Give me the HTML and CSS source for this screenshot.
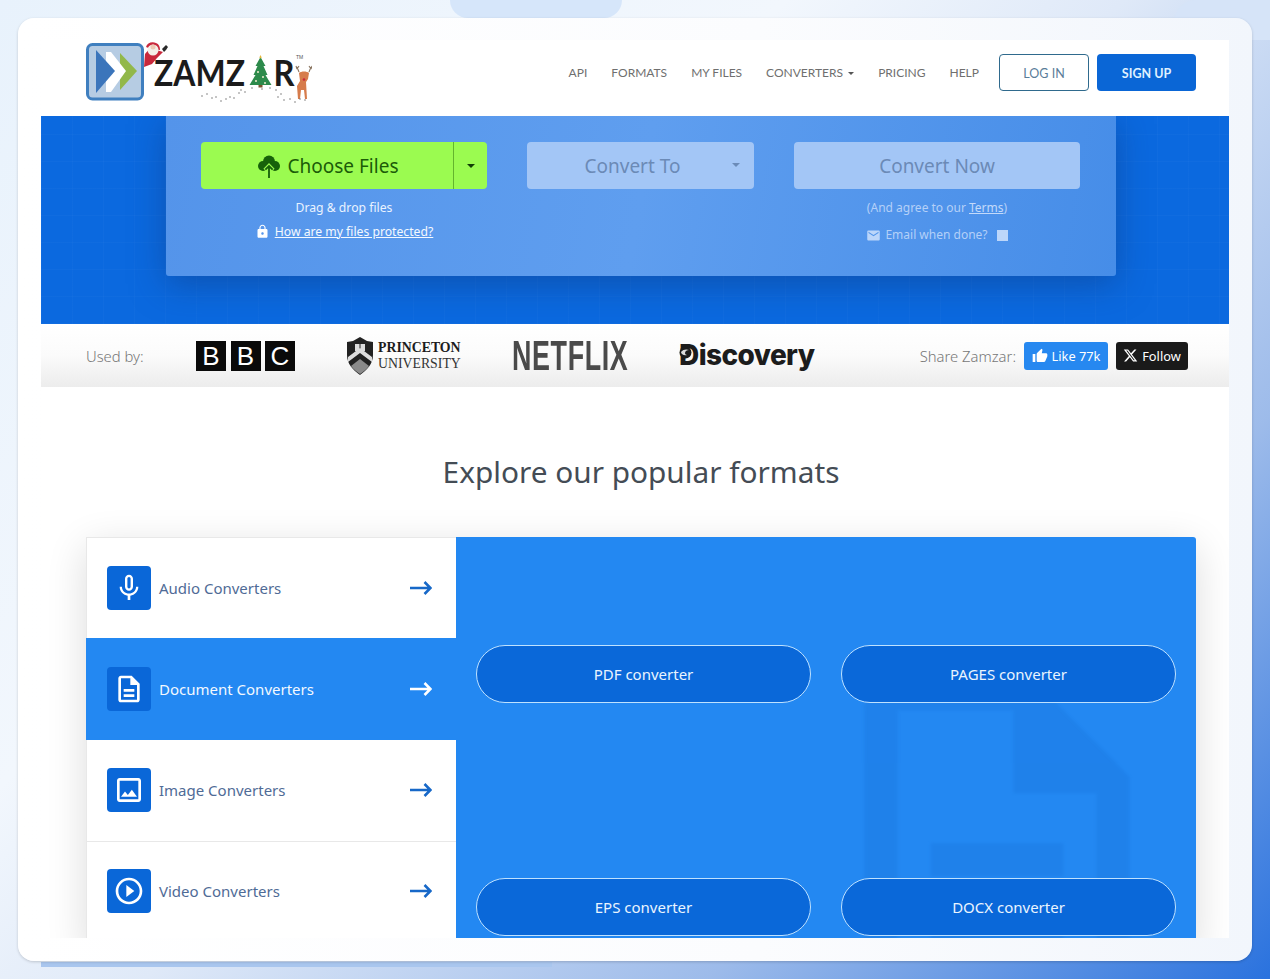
FILE: index.html
```html
<!DOCTYPE html>
<html lang="en">
<head>
    <meta charset="UTF-8">
    <meta name="viewport" content="width=device-width, initial-scale=1.0">
    <title>Zamzar - File Conversion</title>
    <link rel="stylesheet" href="styles.css">
</head>
<body>
    <!-- Background shapes behind the frame -->
    <div class="deco deco-pill"></div>
    <div class="deco deco-corner"></div>
    <div class="deco deco-bar"></div>

    <div class="frame">
        <div class="page">
            <header class="site-header">
                <a href="#" class="logo">
                    <svg width="228" height="64" viewBox="84 40 228 64">
                        <rect x="87.5" y="44.5" width="55" height="54.5" rx="5" fill="#b6cce3" stroke="#3f7fbf" stroke-width="3"/>
                        <path d="M120 53l17 18-17 19z" fill="#92b84a"/>
                        <path d="M106 52h5l15 19-15 21h-5z" fill="#fff"/>
                        <path d="M96 50l19 21-19 22z" fill="#3b75bb"/>
                        <!-- santa -->
                        <path d="M144 67l1-13 5-6 13 4-6 6-5 6z" fill="#c9283c"/>
                        <path d="M146 47c1-4 6-6 10-4 3 1 4 4 4 7l-9-1z" fill="#c9283c"/>
                        <circle cx="153" cy="50" r="5.5" fill="#f4efe9"/>
                        <circle cx="153" cy="47" r="2.5" fill="#eec9b4"/>
                        <path d="M162 49l4-4 2 2-2 3-2 2z" fill="#2a2a2a"/>
                        <text x="154" y="85.5" textLength="91" lengthAdjust="spacingAndGlyphs" class="logo-word">ZAMZ</text>
                        <text x="273.5" y="85.5" textLength="21" lengthAdjust="spacingAndGlyphs" class="logo-word">R</text>
                        <text x="296" y="59" class="logo-tm">TM</text>
                        <!-- tree -->
                        <path d="M260.5 57l5 9h-2l4 9h-2l6 10h-22l6-10h-2l4-9h-2z" fill="#2d8a4b"/>
                        <path d="M260.5 55l1.2 2.5-1.2 1-1.2-1z" fill="#e5b73b"/>
                        <circle cx="258" cy="72" r="1" fill="#f2eccf"/><circle cx="263" cy="77" r="1" fill="#f2eccf"/><circle cx="256" cy="81" r="1" fill="#f2eccf"/><circle cx="265" cy="83" r="1" fill="#f2eccf"/>
                        <rect x="258.5" y="85" width="4" height="2.5" fill="#7a5330"/>
                        <!-- reindeer -->
                        <path d="M299 73c2-2 8-2 10 0l-1 6-2 3 1 17h-2l-1-9h-3l-1 9h-2l-1-13 3-5z" fill="#d67c4c"/>
                        <path d="M299 72l-2-5m0 2l-1-3m1 3l2-3M309 72l2-5m0 2l1-3m-1 3l-2-3" stroke="#8a7560" stroke-width="1.1" fill="none"/>
                        <circle cx="304" cy="79.5" r="1.3" fill="#c9283c"/>
                        <!-- paw prints -->
                        <g fill="#7b7b7b">
                            <circle cx="202" cy="96" r=".8"/><circle cx="207" cy="94" r=".8"/><circle cx="212" cy="98" r=".8"/><circle cx="216" cy="97" r=".8"/><circle cx="221" cy="101" r=".8"/><circle cx="226" cy="99" r=".8"/><circle cx="230" cy="97" r=".8"/><circle cx="234" cy="98" r=".8"/><circle cx="239" cy="93" r=".8"/><circle cx="241" cy="90" r=".8"/><circle cx="245" cy="92" r=".8"/><circle cx="252" cy="88" r=".8"/><circle cx="262" cy="89" r=".8"/><circle cx="270" cy="88" r=".8"/><circle cx="276" cy="90" r=".8"/><circle cx="281" cy="94" r=".8"/><circle cx="278" cy="97" r=".8"/><circle cx="284" cy="100" r=".8"/><circle cx="290" cy="99" r=".8"/><circle cx="295" cy="102" r=".8"/><circle cx="300" cy="99" r=".8"/><circle cx="305" cy="100" r=".8"/>
                        </g>
                    </svg>
                </a>
                <nav class="main-nav">
                    <a href="#" class="nav-link">API</a>
                    <a href="#" class="nav-link">FORMATS</a>
                    <a href="#" class="nav-link">MY FILES</a>
                    <a href="#" class="nav-link">CONVERTERS <span class="nav-caret"></span></a>
                    <a href="#" class="nav-link">PRICING</a>
                    <a href="#" class="nav-link">HELP</a>
                    <a href="#" class="btn-login">LOG IN</a>
                    <a href="#" class="btn-signup">SIGN UP</a>
                </nav>
            </header>

            <section class="hero">
                <div class="upload-card">
                    <div class="upload-col">
                        <div class="choose-btn">
                            <span class="choose-main">
                                <svg width="22" height="24" viewBox="0 0 24 26">
                                    <circle cx="12" cy="8" r="6.5" fill="#17610a"/>
                                    <circle cx="5.5" cy="13" r="5.5" fill="#17610a"/>
                                    <circle cx="18.5" cy="13" r="5.5" fill="#17610a"/>
                                    <path d="M12 26V13M7.5 17.5L12 13l4.5 4.5" fill="none" stroke="#9bfb50" stroke-width="4.5"/>
                                    <path d="M12 26V13M8 17l4-4 4 4" fill="none" stroke="#17610a" stroke-width="2"/>
                                </svg>
                                Choose Files
                            </span>
                            <span class="choose-drop"><span class="caret caret-dark"></span></span>
                        </div>
                        <p class="upload-note">Drag &amp; drop files</p>
                        <p class="upload-note protected">
                            <svg width="15" height="15" viewBox="0 0 24 24"><path d="M18 8h-1V6c0-2.76-2.24-5-5-5S7 3.24 7 6v2H6c-1.1 0-2 .9-2 2v10c0 1.1.9 2 2 2h12c1.1 0 2-.9 2-2V10c0-1.1-.9-2-2-2zm-6 9c-1.1 0-2-.9-2-2s.9-2 2-2 2 .9 2 2-.9 2-2 2zm3.1-9H8.9V6c0-1.71 1.39-3.1 3.1-3.1 1.71 0 3.1 1.39 3.1 3.1v2z" fill="#fff"/></svg>
                            <a href="#">How are my files protected?</a>
                        </p>
                    </div>
                    <div class="upload-col">
                        <div class="step-btn step-select">Convert To <span class="caret caret-faded"></span></div>
                    </div>
                    <div class="upload-col">
                        <div class="step-btn">Convert Now</div>
                        <p class="upload-note faded">(And agree to our <a href="#">Terms</a>)</p>
                        <p class="upload-note faded email-row">
                            <svg width="15" height="15" viewBox="0 0 24 24"><path d="M20 4H4c-1.1 0-2 .9-2 2v12c0 1.1.9 2 2 2h16c1.1 0 2-.9 2-2V6c0-1.1-.9-2-2-2zm0 4l-8 5-8-5V6l8 5 8-5v2z" fill="#bcd6fa"/></svg>
                            Email when done?
                            <span class="email-check"></span>
                        </p>
                    </div>
                </div>
            </section>

            <section class="used-by">
                <span class="used-label">Used by:</span>
                <div class="bbc"><span>B</span><span>B</span><span>C</span></div>
                <div class="princeton">
                    <svg width="28" height="38" viewBox="0 0 28 38">
                        <path d="M1 5l6-1 7-4 7 4 6 1v13c0 9-6 15-13 20C7 33 1 27 1 18z" fill="#222"/>
                        <path d="M9 7h10v7H9z" fill="#ddd"/>
                        <path d="M14 7v7" stroke="#222"/>
                        <path d="M2 25l12-9 12 9v-5l-12-9-12 9z" fill="#ddd"/>
                        <path d="M5 29c3 4 6 6 9 8 3-2 6-4 9-8l-9-7z" fill="#8a8a8a"/>
                    </svg>
                    <div class="princeton-name"><b>PRINCETON</b><span>UNIVERSITY</span></div>
                </div>
                <div class="netflix">NETFLIX</div>
                <div class="discovery">
                    Discovery
                    <svg class="discovery-globe" width="13" height="13" viewBox="0 0 13 13"><circle cx="6.5" cy="6.5" r="6" fill="#1c1c1c"/><path d="M2 6c2-3 6-3 8-2-2 0-4 1-4 3 0 1 1 2 2 2-3 1-6-1-6-3z" fill="#ddd"/></svg>
                </div>
                <div class="share">
                    <span class="share-label">Share Zamzar:</span>
                    <a href="#" class="share-btn share-like">
                        <svg width="16" height="16" viewBox="0 0 24 24"><path d="M1 21h4V9H1v12zm22-11c0-1.1-.9-2-2-2h-6.31l.95-4.57.03-.32c0-.41-.17-.79-.44-1.06L14.17 1 7.59 7.59C7.22 7.95 7 8.45 7 9v10c0 1.1.9 2 2 2h9c.83 0 1.54-.5 1.84-1.22l3.02-7.05c.09-.23.14-.47.14-.73v-2z" fill="#fff"/></svg>
                        Like 77k
                    </a>
                    <a href="#" class="share-btn share-follow">
                        <svg width="15" height="15" viewBox="0 0 24 24"><path d="M18.244 2.25h3.308l-7.227 8.26 8.502 11.24H16.17l-5.214-6.817L4.99 21.75H1.68l7.73-8.835L1.254 2.25H8.08l4.713 6.231zm-1.161 17.52h1.833L7.084 4.126H5.117z" fill="#fff"/></svg>
                        Follow
                    </a>
                </div>
            </section>

            <section class="formats">
                <h2 class="formats-title">Explore our popular formats</h2>
                <div class="formats-panel">
                    <div class="format-tabs">
                        <a href="#" class="format-tab">
                            <span class="tab-icon"><svg width="32" height="32" viewBox="0 0 24 24"><path d="M12 14c1.66 0 3-1.34 3-3V5c0-1.66-1.34-3-3-3S9 3.34 9 5v6c0 1.66 1.34 3 3 3zm-1.2-9.1c0-.66.54-1.2 1.2-1.2.66 0 1.2.54 1.2 1.2l-.01 6.2c0 .66-.53 1.2-1.19 1.2-.66 0-1.2-.54-1.2-1.2V4.9zm6.5 6.1c0 3-2.54 5.1-5.3 5.1S6.7 14 6.7 11H5c0 3.41 2.72 6.23 6 6.72V21h2v-3.28c3.28-.48 6-3.3 6-6.72h-1.7z"/></svg></span>
                            <span class="tab-label">Audio Converters</span>
                            <svg class="tab-arrow" width="22" height="16" viewBox="0 0 22 16"><path d="M0 8h20M14.5 2L20.5 8 14.5 14"/></svg>
                        </a>
                        <a href="#" class="format-tab active">
                            <span class="tab-icon"><svg width="32" height="32" viewBox="0 0 24 24"><path d="M8 16h8v2H8zm0-4h8v2H8zm6-10H6c-1.1 0-2 .9-2 2v16c0 1.1.89 2 1.99 2H18c1.1 0 2-.9 2-2V8l-6-6zm4 18H6V4h7v5h5v11z"/></svg></span>
                            <span class="tab-label">Document Converters</span>
                            <svg class="tab-arrow" width="22" height="16" viewBox="0 0 22 16"><path d="M0 8h20M14.5 2L20.5 8 14.5 14"/></svg>
                        </a>
                        <a href="#" class="format-tab">
                            <span class="tab-icon"><svg width="32" height="32" viewBox="0 0 24 24"><path d="M19 5v14H5V5h14m0-2H5c-1.1 0-2 .9-2 2v14c0 1.1.9 2 2 2h14c1.1 0 2-.9 2-2V5c0-1.1-.9-2-2-2zm-4.86 8.86l-3 3.87L9 13.14 6 17h12l-3.86-5.14z"/></svg></span>
                            <span class="tab-label">Image Converters</span>
                            <svg class="tab-arrow" width="22" height="16" viewBox="0 0 22 16"><path d="M0 8h20M14.5 2L20.5 8 14.5 14"/></svg>
                        </a>
                        <a href="#" class="format-tab">
                            <span class="tab-icon"><svg width="32" height="32" viewBox="0 0 24 24"><path d="M10 16.5l6-4.5-6-4.5v9zM12 2C6.48 2 2 6.48 2 12s4.48 10 10 10 10-4.48 10-10S17.52 2 12 2zm0 18c-4.41 0-8-3.59-8-8s3.59-8 8-8 8 3.59 8 8-3.59 8-8 8z"/></svg></span>
                            <span class="tab-label">Video Converters</span>
                            <svg class="tab-arrow" width="22" height="16" viewBox="0 0 22 16"><path d="M0 8h20M14.5 2L20.5 8 14.5 14"/></svg>
                        </a>
                    </div>
                    <div class="format-links">
                        <!-- faded document watermark -->
                        <svg class="watermark" width="398" height="398" viewBox="0 0 24 24"><path d="M8 16h8v2H8zm0-4h8v2H8zm6-10H6c-1.1 0-2 .9-2 2v16c0 1.1.89 2 1.99 2H18c1.1 0 2-.9 2-2V8l-6-6zm4 18H6V4h7v5h5v11z"/></svg>
                        <a href="#" class="format-link">PDF converter</a>
                        <a href="#" class="format-link">PAGES converter</a>
                        <a href="#" class="format-link">EPS converter</a>
                        <a href="#" class="format-link">DOCX converter</a>
                    </div>
                </div>
            </section>
        </div>
    </div>
</body>
</html>
```

FILE: styles.css
```css
* {
    box-sizing: border-box;
    margin: 0;
    padding: 0;
}

body {
    font-family: "Noto Sans", Arial, sans-serif;
    height: 100vh;
    padding: 18px;
    overflow: hidden;
    position: relative;
    background: linear-gradient(135deg, #e8f2fc 0%, #f2f7fd 35%, #dfe9f8 50%, #9dbbea 75%, #2a72de 100%);
}

a {
    text-decoration: none;
}

.deco {
    position: absolute;
}

.deco-pill {
    left: 450px;
    top: 0;
    width: 172px;
    height: 18px;
    background: #d6e6fa;
    border-radius: 0 0 20px 20px;
}

.deco-corner {
    left: 1174px;
    top: 0;
    width: 96px;
    height: 40px;
    background: #d6e4f8;
    border-radius: 22px 0 0 0;
}

.deco-bar {
    left: 41px;
    top: 962px;
    width: 511px;
    height: 5px;
    background: #a9c6ee;
}

.frame {
    position: relative;
    height: 943px;
    padding: 22px 23px 23px;
    border-radius: 16px;
    background: linear-gradient(90deg, #fff 0%, #fbfcfe 60%, #f2f6fc 100%);
    box-shadow: 0 1px 3px rgba(0, 0, 0, 0.18);
}

.page {
    height: 100%;
    overflow: hidden;
    background: #fff;
}

/* header */
.site-header {
    display: flex;
    justify-content: space-between;
    align-items: center;
    height: 76px;
    padding: 0 33px 12px 43px;
}

.logo {
    display: block;
    height: 64px;
}

.logo-word {
    font-family: "Lato", sans-serif;
    font-size: 37px;
    font-weight: 700;
    fill: #1b1b1b;
}

.logo-tm {
    font-family: "Liberation Sans", sans-serif;
    font-size: 5px;
    fill: #555;
}

.main-nav {
    display: flex;
    align-items: center;
    gap: 24px;
}

.nav-link {
    font-family: "Lato", sans-serif;
    font-size: 12px;
    color: #6f6f6f;
    white-space: nowrap;
}

.nav-caret {
    display: inline-block;
    margin-left: 2px;
    vertical-align: middle;
    border-top: 3px solid #555;
    border-left: 3px solid transparent;
    border-right: 3px solid transparent;
}

.btn-login,
.btn-signup {
    display: flex;
    align-items: center;
    justify-content: center;
    height: 37px;
    padding-top: 3px;
    font-family: "Lato", sans-serif;
    font-size: 12.5px;
    border-radius: 4px;
}

.btn-login {
    width: 90px;
    margin-left: -4px;
    color: #5a7d99;
    border: 1px solid #2f6a8d;
}

.btn-signup {
    width: 99px;
    margin-left: -16px;
    color: #dff0ff;
    font-weight: 700;
    background: #0a66d6;
}

/* hero with the upload card */
.hero {
    height: 208px;
    padding: 0 113px 0 125px;
    overflow: hidden;
    background-color: #0b69df;
    background-image:
        repeating-linear-gradient(90deg, rgba(255, 255, 255, 0.02) 0 1px, transparent 1px 31px),
        repeating-linear-gradient(0deg, rgba(255, 255, 255, 0.02) 0 1px, transparent 1px 27px);
}

.upload-card {
    display: grid;
    grid-template-columns: 286px 227px 286px;
    column-gap: 40px;
    height: 160px;
    padding: 26px 35px 0;
    border-radius: 0 0 3px 3px;
    background: linear-gradient(100deg, #5494ea 0%, #5f9eef 50%, #468de8 100%);
    box-shadow: 0 8px 34px rgba(16, 60, 130, 0.5);
}

.choose-btn {
    display: flex;
    height: 47px;
    border-radius: 4px;
    color: #1b5c08;
    background: #9bfb50;
}

.choose-main {
    flex: 1;
    display: flex;
    align-items: center;
    justify-content: center;
    gap: 8px;
    padding-left: 2px;
    font-size: 19px;
    border-right: 1px solid #63b52d;
}

.choose-drop {
    display: flex;
    align-items: center;
    justify-content: center;
    width: 33px;
}

.caret {
    display: inline-block;
    border-top: 4px solid #17610a;
    border-left: 4px solid transparent;
    border-right: 4px solid transparent;
}

.caret-dark {
    border-top-color: #123d06;
}

.caret-faded {
    border-top-color: #6b8bb8;
    position: absolute;
    right: 14px;
    top: 21px;
}

.step-btn {
    position: relative;
    display: flex;
    align-items: center;
    justify-content: center;
    height: 47px;
    font-size: 19px;
    color: #6b8ab6;
    background: #a3c6f6;
    border-radius: 4px;
}

.step-select {
    padding-right: 16px;
}

.upload-note {
    display: flex;
    align-items: center;
    justify-content: center;
    gap: 5px;
    height: 20px;
    margin-top: 8px;
    font-size: 12.2px;
    color: #e9f3ff;
}

.protected {
    margin-top: 4px;
}

.upload-note a {
    color: #f4f9ff;
    text-decoration: underline;
}

.faded {
    display: block;
    margin-top: 9px;
    line-height: 20px;
    font-size: 12px;
    text-align: center;
    color: #b4d0f8;
}

.faded a {
    color: #c3dafa;
}

.email-row {
    display: flex;
    margin-top: 7px;
    gap: 4px;
}

.email-check {
    width: 11px;
    height: 11px;
    margin-left: 5px;
    background: #bcd6fa;
}

/* used by strip */
.used-by {
    display: flex;
    align-items: center;
    height: 63px;
    padding: 0 41px 0 45px;
    background: linear-gradient(180deg, #fff 0%, #fbfbfb 50%, #ececec 100%);
}

.used-label,
.share-label {
    font-size: 14.8px;
    font-weight: 300;
    color: #777;
}

.used-label {
    width: 110px;
    flex-shrink: 0;
}

.bbc {
    display: flex;
    gap: 4.5px;
    width: 150px;
    flex-shrink: 0;
}

.bbc span {
    width: 30px;
    height: 30px;
    line-height: 30px;
    text-align: center;
    font-family: "Liberation Sans", sans-serif;
    font-size: 26px;
    color: #fff;
    background: #0a0a0a;
}

.princeton {
    display: flex;
    align-items: center;
    gap: 4px;
    width: 166px;
    flex-shrink: 0;
}

.princeton-name {
    display: flex;
    flex-direction: column;
    font-family: "Liberation Serif", serif;
    font-size: 13.8px;
    line-height: 16px;
    color: #333;
}

.princeton-name b {
    color: #1c1c1c;
}

.netflix {
    width: 167px;
    flex-shrink: 0;
    margin-bottom: 2px;
    font-family: "Liberation Sans", sans-serif;
    font-size: 43px;
    font-weight: 700;
    letter-spacing: 1px;
    line-height: 38px;
    color: #4a4a4a;
    transform: scaleX(0.625);
    transform-origin: left center;
}

.discovery {
    position: relative;
    margin-bottom: 2px;
    font-family: "Inter", sans-serif;
    font-size: 28px;
    font-weight: 800;
    letter-spacing: -0.6px;
    color: #1c1c1c;
}

.discovery-globe {
    position: absolute;
    left: 0;
    top: 8px;
}

.share {
    display: flex;
    align-items: center;
    margin-left: auto;
    gap: 8px;
}

.share-btn {
    display: flex;
    align-items: center;
    justify-content: center;
    gap: 4px;
    height: 28px;
    font-size: 12.8px;
    color: #fff;
    border-radius: 3px;
}

.share-like {
    width: 84px;
    background: #2688f0;
}

.share-follow {
    width: 72px;
    background: #1a1a1a;
}

/* popular formats */
.formats {
    padding: 0 33px 0 45px;
}

.formats-title {
    height: 150px;
    padding-top: 62px;
    text-align: center;
    font-size: 29.8px;
    font-weight: 400;
    line-height: 46px;
    color: #444c55;
}

.formats-panel {
    display: flex;
    box-shadow: 0 10px 40px rgba(0, 0, 0, 0.14);
    border-radius: 3px;
}

.format-tabs {
    width: 370px;
    flex-shrink: 0;
    background: #fff;
}

.format-tab {
    display: flex;
    align-items: center;
    height: 101px;
    padding: 0 24px 0 20px;
    color: #4f6b96;
    border-top: 1px solid #e8e8e8;
    border-left: 1px solid #e8e8e8;
}

.format-tab.active {
    height: 102px;
    padding-left: 21px;
    color: #f2f8ff;
    background: #2388f2;
    border: 0;
}

.format-tab.active ~ .format-tab {
    padding-bottom: 2px;
}

.format-tab.active + .format-tab {
    border-top: 0;
}

.tab-icon {
    display: flex;
    align-items: center;
    justify-content: center;
    width: 44px;
    height: 44px;
    flex-shrink: 0;
    border-radius: 4px;
    background: #0a67d8;
}

.tab-icon path {
    fill: #fff;
}

.tab-label {
    flex: 1;
    margin-left: 8px;
    font-size: 15px;
}

.tab-arrow {
    fill: none;
    stroke: #1768c8;
    stroke-width: 2.6;
}

.active .tab-arrow {
    stroke: #fff;
}

.format-links {
    position: relative;
    flex: 1;
    display: grid;
    grid-template-columns: 1fr 1fr;
    grid-auto-rows: 58px;
    gap: 175px 30px;
    height: 410px;
    padding: 108px 20px 0;
    background: #2388f2;
    border-radius: 0 3px 3px 0;
    overflow: hidden;
}

.watermark {
    position: absolute;
    left: 342px;
    top: 107px;
    fill: #1a78e0;
    opacity: 0.4;
    filter: blur(1.5px);
}

.format-link {
    position: relative;
    display: flex;
    align-items: center;
    justify-content: center;
    font-size: 15px;
    color: #eaf5ff;
    background: #0a68d9;
    border: 1px solid #bfe2ff;
    border-radius: 29px;
}
```
